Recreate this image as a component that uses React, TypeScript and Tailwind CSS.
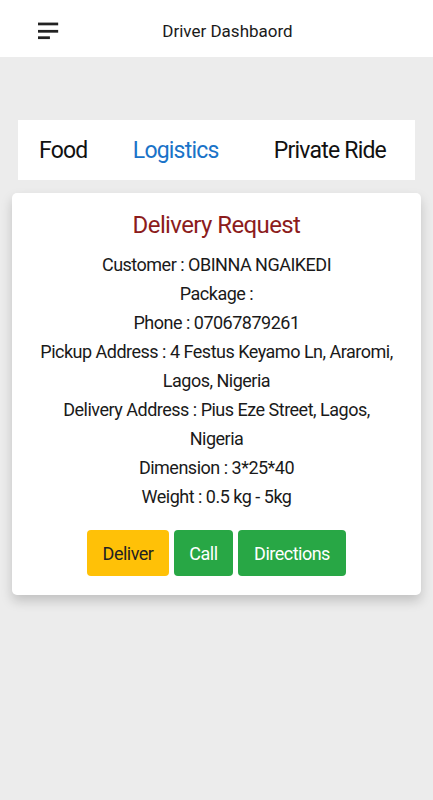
import React from 'react';

const details = [
  'Customer : OBINNA NGAIKEDI',
  'Package :',
  'Phone : 07067879261',
  'Pickup Address : 4 Festus Keyamo Ln, Araromi, Lagos, Nigeria',
  'Delivery Address : Pius Eze Street, Lagos, Nigeria',
  'Dimension : 3*25*40',
  'Weight : 0.5 kg - 5kg',
];

export default function App() {
  return (
    <div className="min-h-[800px] bg-[#ececec] font-['Roboto',sans-serif] text-[#222]">
      <header className="h-[57px] bg-white flex items-center">
        <div className="pl-[38px] w-[60px] flex">
          <svg width="24" height="24" viewBox="0 0 24 24">
            <rect x="0" y="5" width="22" height="3" fill="#222" />
            <rect x="0" y="13" width="22" height="3" fill="#222" />
            <rect x="0" y="20" width="13" height="3" fill="#222" />
          </svg>
        </div>
        <h1 className="flex-1 text-center text-[17px] pr-[38px] pt-[7px] text-[#1a1a1a]">Driver Dashbaord</h1>
      </header>

      <div className="pt-[63px] px-[18px]">
        <nav className="bg-white h-[60px] flex items-center justify-between pl-[21px] pr-[29px] pt-[2px] text-[23px] tracking-[-0.8px]">
          <span className="text-[#111]">Food</span>
          <span className="text-[#1a73c8] mr-[10px]">Logistics</span>
          <span className="text-[#111]">Private Ride</span>
        </nav>
      </div>

      <div className="px-[12px] pt-[13px]">
        <div className="bg-white rounded-[5px] shadow-[0_6px_12px_rgba(0,0,0,0.18)] pt-[10px] pb-[19px] px-[24px] text-center tracking-[-0.5px]">
          <h2 className="text-[24px] text-[#8c1c1c] leading-[44px] tracking-[-0.6px]">Delivery Request</h2>
          <div className="text-[18px] leading-[29px] text-[#1a1a1a] mt-[3px]">
            {details.map((d) => (
              <p key={d}>{d}</p>
            ))}
          </div>
          <div className="flex justify-center gap-[5px] mt-[19px] text-[18px]">
            <button className="h-[46px] w-[82px] rounded-[4px] bg-[#ffc107] text-[#222]">Deliver</button>
            <button className="h-[46px] w-[59px] rounded-[4px] bg-[#28a745] text-white">Call</button>
            <button className="h-[46px] w-[108px] rounded-[4px] bg-[#28a745] text-white">Directions</button>
          </div>
        </div>
      </div>
    </div>
  );
}
